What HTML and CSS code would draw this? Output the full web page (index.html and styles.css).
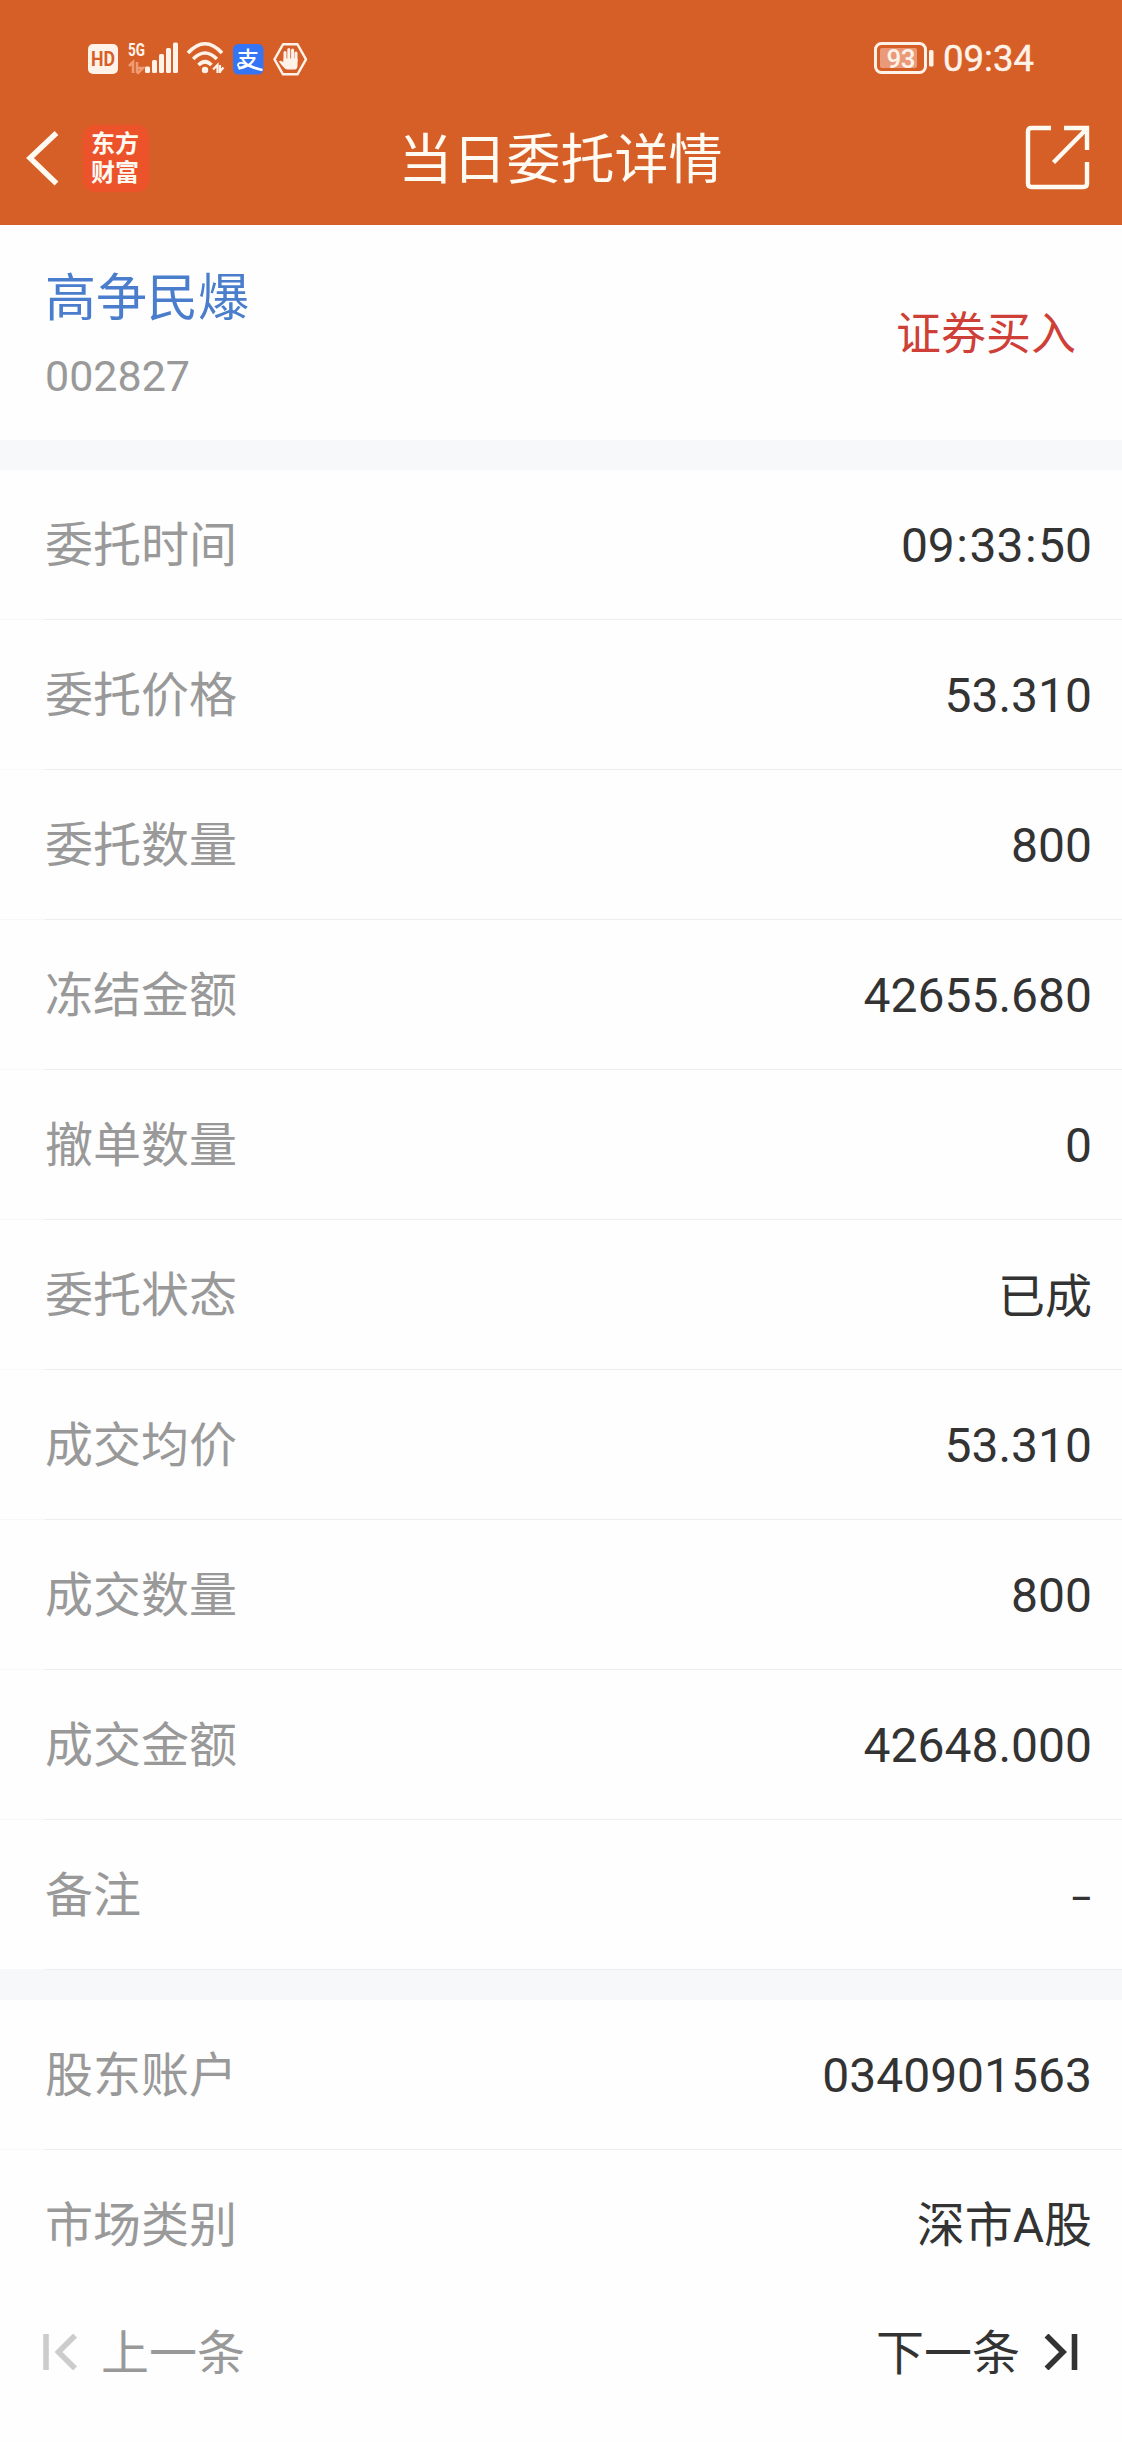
FILE: index.html
```html
<!DOCTYPE html>
<html lang="zh-CN">
<head>
<meta charset="utf-8">
<title>当日委托详情</title>
<link rel="stylesheet" href="styles.css">
</head>
<body>
<header class="top">
  <div class="status">
    <svg class="status-icons" width="224" height="48" viewBox="86 35 224 48">
      <rect x="88" y="44" width="30" height="30" rx="5" fill="#fff3e9"/>
      <text class="hd" x="103" y="66" text-anchor="middle" textLength="24" lengthAdjust="spacingAndGlyphs">HD</text>
      <text class="g5" x="128" y="56" textLength="17" lengthAdjust="spacingAndGlyphs">5G</text>
      <path d="M129 66l4-4v11M137 73V62M137 73h1l5-5h-6" fill="none" stroke="#ef9c75" stroke-width="2.5"/>
      <g fill="#fff3e9">
        <rect x="145" y="66.500" width="5" height="6.500" rx="1.500"/>
        <rect x="152" y="60" width="5" height="13" rx="1.500"/>
        <rect x="159" y="54" width="5" height="19" rx="1.500"/>
        <rect x="166" y="48" width="5" height="25" rx="1.500"/>
        <rect x="173" y="42.500" width="5" height="30.500" rx="1.500"/>
        <circle cx="205" cy="70" r="3.200"/>
      </g>
      <g fill="none" stroke="#fff3e9" stroke-width="3.600">
        <path d="M188 53Q205 34.500 222 53"/>
        <path d="M193.200 59Q205 47 216.800 59"/>
        <path d="M198.500 65Q205 58.500 211.500 65"/>
        <path d="M213 69.500l4.500-4.500v8M220 65v8M220 71.500l3.500-4" stroke-width="2.200"/>
      </g>
      <rect x="233" y="44" width="30.500" height="30.500" rx="5.500" fill="#3475f5"/>
      <text class="pay" x="248" y="67" text-anchor="middle">支</text>
      <path d="M249 65q6 4 13.500 5" fill="none" stroke="#fff" stroke-width="2.600"/>
      <path d="M246 64q-8-3-8 1.500 1.500 4 8-.500" fill="none" stroke="#fff" stroke-width="1.800"/>
      <path d="M283 44.300h14.500l8.500 15-8.500 15H283l-8.500-15z" fill="none" stroke="#fff3e9" stroke-width="2.400" stroke-linejoin="round"/>
      <path d="M285 61V52.500M288.800 60V49.500M292.600 60V50M296 61V53" stroke="#fff3e9" stroke-width="3" stroke-linecap="round"/>
      <path d="M283.500 58.500h14v7q0 4-3 4h-7q-2.500 0-5-3.500l-3.600-4.500q1.600-2 4.600.800z" fill="#fff3e9"/>
    </svg>
    <div class="status-right">
      <svg width="62" height="48" viewBox="873 35 62 48">
        <rect x="875.500" y="43.500" width="50" height="29" rx="6" fill="none" stroke="#fff3e9" stroke-width="3"/>
        <rect x="880" y="48" width="37" height="20" rx="2" fill="#ea9a78"/>
        <rect x="929" y="50" width="4.500" height="16.500" rx="1.500" fill="#fff3e9"/>
        <text class="bat" x="901" y="67.500" text-anchor="middle" textLength="29">93</text>
      </svg>
      <span class="clock">09:34</span>
    </div>
  </div>
  <nav class="nav">
    <div class="nav-left">
      <svg width="34" height="56" viewBox="26 130 34 56"><path d="M56.500 133L30 158l26.500 25.500" fill="none" stroke="#fffaf2" stroke-width="5.400"/></svg>
      <div class="brand"><span>东方</span><span>财富</span></div>
    </div>
    <h1 class="title">当日委托详情</h1>
    <svg class="share" width="66" height="66" viewBox="1024 125 66 66"><path d="M1051 128h-19.500q-3.500 0-3.500 3.500v52q0 3.500 3.500 3.500h52q3.500 0 3.500-3.500V162M1064 128h23v22M1087 128.500L1053.500 162.500" fill="none" stroke="#fffaf2" stroke-width="4.400"/></svg>
  </nav>
</header>
<section class="stock">
  <div>
    <div class="name">高争民爆</div>
    <div class="code">002827</div>
  </div>
  <div class="side">证券买入</div>
</section>
<dl class="list">
  <div class="row"><dt>委托时间</dt><dd>09<span class="colon">:</span>33<span class="colon">:</span>50</dd></div>
  <div class="row"><dt>委托价格</dt><dd>53.310</dd></div>
  <div class="row"><dt>委托数量</dt><dd>800</dd></div>
  <div class="row"><dt>冻结金额</dt><dd>42655.680</dd></div>
  <div class="row"><dt>撤单数量</dt><dd>0</dd></div>
  <div class="row"><dt>委托状态</dt><dd class="han">已成</dd></div>
  <div class="row"><dt>成交均价</dt><dd>53.310</dd></div>
  <div class="row"><dt>成交数量</dt><dd>800</dd></div>
  <div class="row"><dt>成交金额</dt><dd>42648.000</dd></div>
  <div class="row"><dt>备注</dt><dd class="dash">–</dd></div>
</dl>
<dl class="list">
  <div class="row"><dt>股东账户</dt><dd>0340901563</dd></div>
  <div class="row"><dt>市场类别</dt><dd>深市A股</dd></div>
</dl>
<footer class="pager">
  <div class="prev">
    <svg width="36" height="36" viewBox="0 0 36 36"><path d="M3 0v36M32 1.500L15.500 18 32 34.500" fill="none" stroke="#ccc" stroke-width="5.600"/></svg>
    <span>上一条</span>
  </div>
  <div class="next">
    <span>下一条</span>
    <svg width="36" height="36" viewBox="0 0 36 36"><path d="M31.500 0v36M3.500 1.500L20 18 3.500 34.500" fill="none" stroke="#333" stroke-width="5.600"/></svg>
  </div>
</footer>
</body>
</html>
```
FILE: styles.css
```css
* { box-sizing: border-box; }
body {
  margin: 0;
  background: #fefefe;
  color: #333;
  font-family: Roboto, "Noto Sans CJK SC", sans-serif;
  font-size: 48px;
  line-height: 1;
}
svg { display: block; flex: none; }
.top { height: 225px; background: #d65f28; color: #fffaf2; }
.status {
  height: 91px;
  padding: 26px 88px 0 86px;
  display: flex;
  align-items: center;
  justify-content: space-between;
}
.status-right { display: flex; align-items: center; gap: 8px; color: #fff3e9; }
.clock { font-size: 36.5px; line-height: 44px; -webkit-text-stroke: 0.4px #fff3e9; }
.hd { font: 700 20px Roboto, sans-serif; fill: #d65f28; }
.g5 { font: 700 18px Roboto, sans-serif; fill: #fff3e9; }
.pay { font: 500 22px "Noto Sans CJK SC", sans-serif; fill: #fff; }
.bat { font: 500 26px Roboto, sans-serif; fill: #fff3e9; }
.nav {
  height: 134px;
  padding: 0 32px 0 26px;
  display: grid;
  grid-template-columns: 1fr auto 1fr;
  align-items: center;
}
.nav-left { display: flex; align-items: center; gap: 23px; }
.brand {
  width: 66px;
  height: 67px;
  padding: 0 2px 5px 0;
  border-radius: 12px;
  background: #ed532a;
  display: flex;
  flex-direction: column;
  align-items: center;
  justify-content: center;
  gap: 4px;
  font-family: "Noto Sans CJK SC", sans-serif;
  font-size: 24px;
  font-weight: 700;
  line-height: 25px;
}
.title { margin: 0; padding: 6px 0 0 5px; font-size: 54px; font-weight: 400; line-height: 60px; }
.share { justify-self: end; }
.stock {
  height: 215px;
  padding: 41px 46px 0 45px;
  display: flex;
  justify-content: space-between;
}
.name { color: #4b7dcd; font-size: 51px; line-height: 66px; }
.code { margin-top: 19px; color: #999; font-size: 43px; line-height: 50px; }
.side { margin-top: 38px; color: #ce4037; font-size: 45px; line-height: 62px; }
.list { margin: 0; border-top: 30px solid #f6f8fa; }
.row {
  height: 150px;
  padding: 2px 30px 0 45px;
  display: flex;
  align-items: center;
  justify-content: space-between;
  background: linear-gradient(90deg, #f8f8f8 45px, #ededed 45px) bottom / 100% 1px no-repeat;
}
.list:last-of-type .row:last-child { background: none; }
dt { color: #999; }
dd { margin: 0; }
.colon { padding: 0 1.5px; }
.han { font-size: 47px; }
.dash { padding-top: 4px; font-size: 34px; font-weight: 500; }
.pager {
  height: 142px;
  padding: 22px 43px 0;
  display: flex;
  justify-content: space-between;
  align-items: flex-start;
}
.prev, .next { display: flex; align-items: center; height: 60px; }
.prev span, .next span { padding-top: 4px; }
.prev { gap: 22px; color: #999; }
.next { gap: 23px; }
```
